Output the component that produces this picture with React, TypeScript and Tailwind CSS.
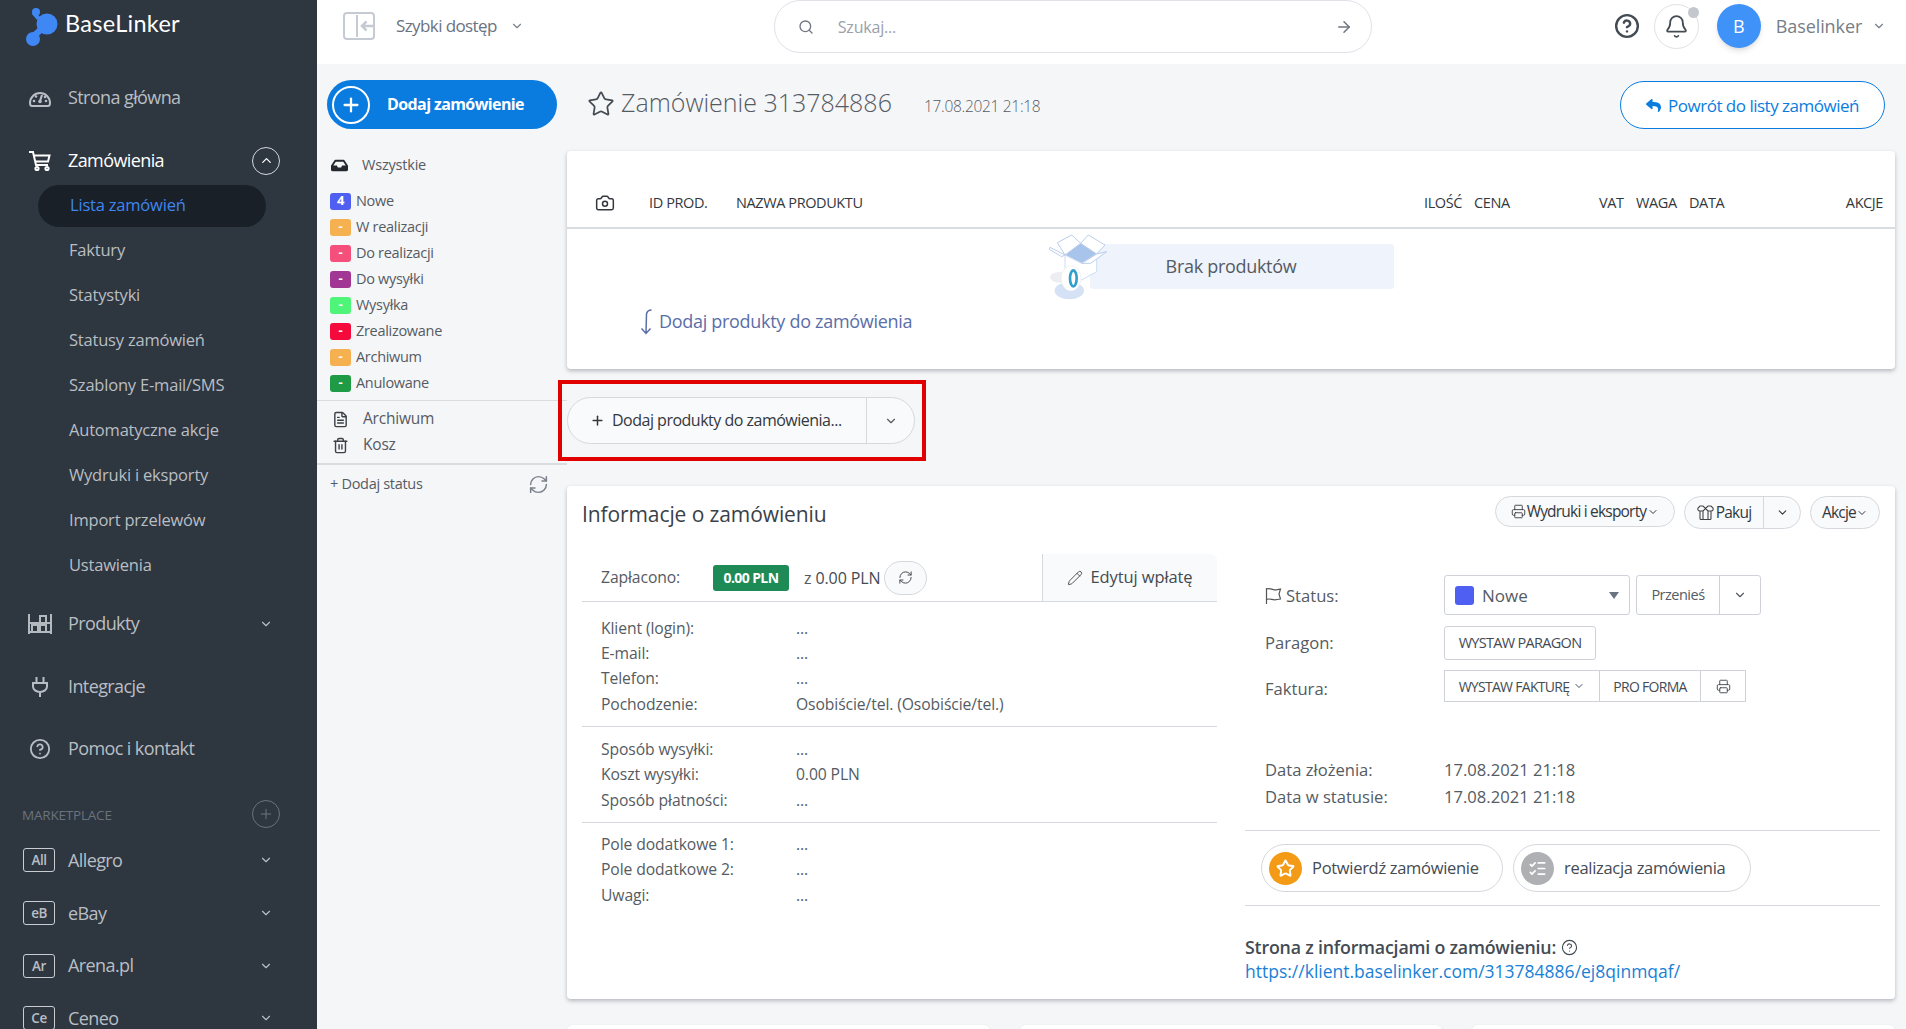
import React from 'react';
import {
  ArrowRight,
  Bell,
  Camera,
  ChevronDown,
  ChevronUp,
  CircleHelp,
  FileText,
  ListChecks,
  Pencil,
  Plus,
  Printer,
  RefreshCw,
  Search,
  Star,
  Trash2,
} from 'lucide-react';
import { FaInbox, FaReply } from 'react-icons/fa';

const subMenu = [
  'Faktury',
  'Statystyki',
  'Statusy zamówień',
  'Szablony E-mail/SMS',
  'Automatyczne akcje',
  'Wydruki i eksporty',
  'Import przelewów',
  'Ustawienia',
];

const marketplaces = [
  { short: 'All', name: 'Allegro' },
  { short: 'eB', name: 'eBay' },
  { short: 'Ar', name: 'Arena.pl' },
  { short: 'Ce', name: 'Ceneo' },
];

const statuses = [
  { label: 'Nowe', count: '4', color: 'bg-[#4f5ff2]' },
  { label: 'W realizacji', count: '-', color: 'bg-[#f5b04f]' },
  { label: 'Do realizacji', count: '-', color: 'bg-[#f54f7b]' },
  { label: 'Do wysyłki', count: '-', color: 'bg-[#a23694]' },
  { label: 'Wysyłka', count: '-', color: 'bg-[#4ff578]' },
  { label: 'Zrealizowane', count: '-', color: 'bg-[#f50a3c]' },
  { label: 'Archiwum', count: '-', color: 'bg-[#f5b04f]' },
  { label: 'Anulowane', count: '-', color: 'bg-[#1f9a45]' },
];

function Logo() {
  return (
    <svg width="34" height="40" viewBox="0 0 34 40" className="shrink-0">
      <g fill="#3f87f5">
        <circle cx="11" cy="5" r="4" />
        <circle cx="22" cy="17" r="10.5" />
        <circle cx="8" cy="32" r="7" />
        <path d="M10 4l5 6-3 3-5-6zM5 28l9-8 4 5-9 8z" />
      </g>
    </svg>
  );
}

function GaugeIcon() {
  return (
    <svg width="22" height="18" viewBox="0 0 22 18" fill="none" stroke="#b9bec4" strokeWidth="2" className="shrink-0">
      <path d="M3 17h16c1 0 2-1 2-3a10 10 0 0 0-20 0c0 2 1 3 2 3z" />
      <path d="M11 12l2-6" strokeWidth="2.200" />
      <circle cx="11" cy="12.500" r="1.800" fill="#b9bec4" stroke="none" />
      <g fill="#b9bec4" stroke="none">
        <circle cx="5" cy="12" r="1.300" />
        <circle cx="7" cy="7.500" r="1.300" />
        <circle cx="16" cy="8" r="1.300" />
        <circle cx="17" cy="12" r="1.300" />
      </g>
    </svg>
  );
}

function CartIcon() {
  return (
    <svg width="22" height="22" viewBox="0 0 22 22" fill="none" stroke="#fff" strokeWidth="2" className="shrink-0">
      <path d="M0 2h4l3 13h12M5 5.500h15.500l-1.500 6H6.500" />
      <circle cx="8" cy="18.500" r="1.600" />
      <circle cx="18" cy="18.500" r="1.600" />
    </svg>
  );
}

function ShelfIcon() {
  return (
    <svg width="24" height="20" viewBox="0 0 24 20" fill="none" stroke="#b4b9bf" strokeWidth="2" className="shrink-0">
      <path d="M1 0v20M23 0v20M1 18h22M1 9h22" />
      <rect x="4" y="11" width="6" height="7" />
      <rect x="12" y="11" width="6" height="7" />
      <rect x="12" y="2" width="6" height="7" />
    </svg>
  );
}

function PlugIcon() {
  return (
    <svg width="16" height="20" viewBox="0 0 16 20" fill="none" stroke="#b9bec4" strokeWidth="2" className="shrink-0 mx-[3px]">
      <path d="M4.500 0v6M11.500 0v6M1 6h14v3.500a7 5.500 0 0 1-14 0zM8 15v5" />
    </svg>
  );
}

function CollapseIcon() {
  return (
    <svg width="32" height="28" viewBox="0 0 32 28" fill="none" stroke="#c6cbd3" strokeWidth="2" className="ml-[26px] shrink-0">
      <rect x="1" y="1" width="30" height="26" rx="3" />
      <path d="M14 3v22" />
      <path d="M31 14H19M23.500 9.500L19 14l4.500 4.500" strokeWidth="2.500" />
    </svg>
  );
}

function FlagIcon() {
  return (
    <svg width="18" height="18" viewBox="0 0 18 18" fill="none" stroke="#555" strokeWidth="1.2" className="shrink-0">
      <path d="M1.500 1v16M1.500 2c4-1.500 5 .8 8 .8 2 0 4-.5 6-.8l-1.500 5 1.500 5c-3 .8-4.500 .8-6 .8-3 0-4-1.600-8-.4" />
    </svg>
  );
}

function BoxIcon() {
  return (
    <svg width="17" height="15" viewBox="0 0 17 15" fill="none" stroke="#444" strokeWidth="1.100" className="shrink-0">
      <path d="M3 6v7.500a1 1 0 0 0 1 1h9a1 1 0 0 0 1-1V6M6 6v8.500M11 6v8.500M3 6C1 6 .5 4.500 1 3l2-2h3l2.500 2.500L11 1h3l2 2c.5 1.500 0 3-2 3h-3L8.500 3.500 6 6z" />
    </svg>
  );
}

function HookArrow() {
  return (
    <svg width="14" height="26" viewBox="0 0 14 26" fill="none" stroke="#5a6ea8" strokeWidth="1.500" className="shrink-0">
      <path d="M12.500 1C9 1 8 2.500 7.500 5L7 24M2.500 19.500L7 24.500l4.500-5" />
    </svg>
  );
}

function EmptyBox() {
  return (
    <svg width="80" height="72" viewBox="0 0 240 216" fill="none" className="absolute left-[-50px] top-[-14px]">
      <ellipse cx="88" cy="182" rx="44" ry="26" fill="#d5e2f5" />
      <ellipse cx="58" cy="142" rx="28" ry="16" fill="#eceef1" />
      <path d="M75 75l47-35 48 32-45 28z" fill="#a9c4ea" />
      <path d="M75 75l50 25 45-28v53l-45 25-50-25z" fill="#fff" stroke="#cddcf3" strokeWidth="3" />
      <path d="M122 40L95 15 52 38l23 37zM122 40l23-25 50 30-25 27z" fill="#fff" stroke="#b9cdec" strokeWidth="3" />
      <path d="M75 75L30 52l-2 6 37 22zM125 100l45-28 30-7-48 35z" fill="#fff" stroke="#b9cdec" strokeWidth="3" />
      <ellipse cx="93" cy="145" rx="30" ry="38" fill="#fff" stroke="#e8ebf0" strokeWidth="2" />
      <ellipse cx="100" cy="145" rx="10" ry="24" fill="#fff" stroke="#2f9fcf" strokeWidth="8" />
    </svg>
  );
}

function Sidebar() {
  return (
    <aside className="w-[317px] shrink-0 bg-[#2e363f] overflow-hidden text-[#b9bec4]">
      <div className="h-[75px] pl-[25px] pt-[7px] flex gap-[6px]">
        <Logo />
        <span className="font-['Lato',sans-serif] text-[23.500px] leading-[32px] tracking-[0.3px] text-white">BaseLinker</span>
      </div>
      <div className="h-[45px] flex items-center pl-[29px]">
        <GaugeIcon />
        <span className="ml-[17px] text-[18px] tracking-[-0.6px]">Strona główna</span>
      </div>
      <div className="mt-[18px] h-[45px] flex items-center pl-[29px] pr-[37px] text-white">
        <CartIcon />
        <span className="ml-[17px] text-[18px] tracking-[-0.6px] flex-1">Zamówienia</span>
        <span className="w-[28px] h-[28px] rounded-full border border-[#d4d7da] flex items-center justify-center">
          <ChevronUp size={15} />
        </span>
      </div>
      <div className="h-[45px] flex items-center">
        <div className="ml-[38px] w-[228px] h-[42px] rounded-[21px] bg-[#1a2027] pl-[32px] flex items-center text-[16.500px] tracking-[-0.2px] text-[#3f87f0]">
          Lista zamówień
        </div>
      </div>
      {subMenu.map((item) => (
        <div key={item} className="h-[45px] pl-[69px] flex items-center text-[16.500px] tracking-[-0.2px]">
          {item}
        </div>
      ))}
      <div className="mt-[13px] h-[45px] flex items-center pl-[28px] pr-[44px]">
        <ShelfIcon />
        <span className="ml-[16px] text-[18px] tracking-[-0.6px] flex-1">Produkty</span>
        <ChevronDown size={14} />
      </div>
      <div className="mt-[18px] h-[45px] flex items-center pl-[29px]">
        <PlugIcon />
        <span className="ml-[17px] text-[18px] tracking-[-0.6px]">Integracje</span>
      </div>
      <div className="mt-[17px] h-[45px] flex items-center pl-[29px]">
        <CircleHelp size={22} className="shrink-0" />
        <span className="ml-[17px] text-[18px] tracking-[-0.6px]">Pomoc i kontakt</span>
      </div>
      <div className="mt-[26px] h-[34px] flex items-center pl-[22px] pr-[37px] text-[#6a737d]">
        <span className="flex-1 text-[13.500px] tracking-[-0.2px] mt-[2px]">MARKETPLACE</span>
        <span className="w-[28px] h-[28px] rounded-full border-[1.500px] border-[#6a737d] flex items-center justify-center">
          <Plus size={16} strokeWidth={1.500} />
        </span>
      </div>
      <div className="mt-[3px]">
        {marketplaces.map((m) => (
          <div key={m.name} className="h-[52.700px] flex items-center pl-[23px] pr-[44px]">
            <span className="w-[32px] h-[24px] rounded-[3px] border border-[#c9cdd1] flex items-center justify-center text-[13.500px] font-semibold tracking-[-0.5px]">
              {m.short}
            </span>
            <span className="ml-[13px] text-[18px] tracking-[-0.6px] flex-1">{m.name}</span>
            <ChevronDown size={14} />
          </div>
        ))}
      </div>
    </aside>
  );
}

function TopBar() {
  return (
    <header className="h-16 shrink-0 bg-white flex items-center pb-[12px]">
      <CollapseIcon />
      <span className="ml-[21px] text-[17px] tracking-[-0.6px] text-[#6b7280]">Szybki dostęp</span>
      <ChevronDown size={14} className="ml-[13px] text-[#7a818a]" />
      <div className="ml-[250px] w-[598px] h-[53px] self-start rounded-[26px] border border-[#dfe2e7] flex items-center pl-[23px] pr-[18px] text-[#6f7680]">
        <Search size={16} />
        <span className="ml-[24px] text-[16px] tracking-[-0.2px] text-[#9aa1ab] flex-1">Szukaj...</span>
        <ArrowRight size={18} />
      </div>
      <CircleHelp size={26} strokeWidth={2.200} className="ml-[242px] text-[#444b53]" />
      <div className="ml-[14px] relative w-[45px] h-[45px] rounded-full border border-[#dfe2e7] flex items-center justify-center text-[#444b53]">
        <Bell size={25} strokeWidth={1.700} />
        <span className="absolute -right-[1px] top-[2px] w-[11px] h-[11px] rounded-full bg-[#c4c8ce]" />
      </div>
      <div className="ml-[18px] w-[44px] h-[44px] rounded-full bg-[#3f92f7] shadow-md text-white flex items-center justify-center text-[18px]">
        B
      </div>
      <span className="ml-[15px] text-[18px] tracking-[-0.1px] text-[#777e87]">Baselinker</span>
      <ChevronDown size={14} className="ml-[10px] text-[#777e87]" />
    </header>
  );
}

function StatusColumn() {
  return (
    <div className="w-[250px] shrink-0 text-[#555b63]">
      <div className="ml-[10px] mt-[16px] w-[230px] h-[49px] rounded-full bg-[#0a7ce0] flex items-center pl-[5px] text-white">
        <span className="w-[38px] h-[38px] rounded-full border-2 border-white flex items-center justify-center">
          <Plus size={22} strokeWidth={2.500} />
        </span>
        <span className="ml-[17px] mb-[2px] text-[16px] font-bold tracking-[-0.6px]">Dodaj zamówienie</span>
      </div>
      <div className="mt-[23px] h-[26px] flex items-center pl-[14px] text-[14.500px] tracking-[-0.2px]">
        <FaInbox size={17} className="text-[#23282e]" />
        <span className="ml-[14px]">Wszystkie</span>
      </div>
      <div className="mt-[10px] pl-[13px]">
        {statuses.map((s) => (
          <div key={s.label} className="h-[26px] flex items-center text-[14.500px] tracking-[-0.3px]">
            <span className={`w-[21px] h-[17px] rounded-[3px] ${s.color} text-white text-[13px] font-bold flex items-center justify-center`}>
              {s.count}
            </span>
            <span className="ml-[5px]">{s.label}</span>
          </div>
        ))}
      </div>
      <div className="mt-[4px] border-t border-[#d9dce1] pt-[5px] pb-[5px] pl-[15px] text-[15.500px] tracking-[-0.2px]">
        <div className="h-[26px] flex items-center">
          <FileText size={17} className="text-[#3c4148]" />
          <span className="ml-[14px]">Archiwum</span>
        </div>
        <div className="h-[26px] flex items-center">
          <Trash2 size={17} className="text-[#3c4148]" />
          <span className="ml-[14px]">Kosz</span>
        </div>
      </div>
      <div className="border-t-2 border-[#d9dce1] pt-[6px] pl-[13px] pr-[18px] h-[34px] flex items-center justify-between text-[14.500px] tracking-[-0.3px]">
        <span>+ Dodaj status</span>
        <RefreshCw size={21} strokeWidth={1.700} className="text-[#7a818a]" />
      </div>
    </div>
  );
}

function ProductsCard() {
  return (
    <section className="mt-[22px] h-[218px] rounded-[4px] bg-white shadow-[0_2px_4px_rgba(60,70,85,0.35)]">
      <div className="h-[78px] pt-[28px] border-b-2 border-[#d9dce1] flex items-center text-[14.500px] tracking-[-0.4px] text-[#33383e]">
        <span className="w-[82px] pl-[28px]">
          <Camera size={20} strokeWidth={1.800} />
        </span>
        <span className="w-[87px]">ID PROD.</span>
        <span className="w-[688px]">NAZWA PRODUKTU</span>
        <span className="w-[50px]">ILOŚĆ</span>
        <span className="w-[125px]">CENA</span>
        <span className="w-[37px]">VAT</span>
        <span className="w-[53px]">WAGA</span>
        <span className="flex-1">DATA</span>
        <span className="pr-[12px]">AKCJE</span>
      </div>
      <div className="relative ml-[523px] mt-[15px] w-[304px] h-[45px] rounded-[3px] bg-[#eef3fc] flex items-center justify-center pr-[22px] text-[18px] tracking-[-0.3px] text-[#555b63]">
        <EmptyBox />
        Brak produktów
      </div>
      <div className="mt-[19px] pl-[72px] flex items-center gap-[6px] text-[18px] tracking-[-0.3px] text-[#5a6ea8]">
        <HookArrow />
        Dodaj produkty do zamówienia
      </div>
    </section>
  );
}

function AddProductsButton() {
  return (
    <div className="relative mt-[28px] w-[348px] h-[47px]">
      <div className="h-full rounded-full border border-[#d5d8dd] bg-[#f9fafb] flex items-center text-[#33383e]">
        <div className="flex-1 h-full flex items-center pl-[22px] pb-[1px] border-r border-[#d5d8dd] font-medium text-[16px] tracking-[-0.5px]">
          <Plus size={15} strokeWidth={2.400} />
          <span className="ml-[7px]">Dodaj produkty do zamówienia...</span>
        </div>
        <div className="w-[47px] flex justify-center text-[#555b63]">
          <ChevronDown size={14} />
        </div>
      </div>
      <div className="absolute -left-[9px] -right-[11px] -top-[17px] -bottom-[17px] border-[4px] border-[#e00000]" />
    </div>
  );
}

function InfoRow({ label, value }: { label: string; value: string }) {
  return (
    <div className="h-[25.300px] flex items-center">
      <span className="w-[195px] shrink-0">{label}</span>
      <span>{value}</span>
    </div>
  );
}

function PillButton({ children, className }: { children: React.ReactNode; className: string }) {
  return (
    <div className={`rounded-full border border-[#d5d8dd] bg-[#f9fafb] flex items-center text-[15.500px] tracking-[-0.8px] text-[#33383e] ${className}`}>
      {children}
    </div>
  );
}

function OrderInfo() {
  return (
    <section className="mt-[42px] h-[513px] rounded-[4px] bg-white shadow-[0_2px_4px_rgba(60,70,85,0.35)]">
      <div className="h-[67px] pl-[15px] pr-[15px] flex justify-between text-[#3a4149]">
        <h2 className="text-[21px] font-medium tracking-[-0.1px] mt-[13px] leading-[30px]">Informacje o zamówieniu</h2>
        <div className="flex gap-[9px] pt-[10px]">
          <PillButton className="w-[180px] h-[31px] justify-center gap-[1px]">
            <Printer size={15} strokeWidth={1.400} />
            Wydruki i eksporty
            <ChevronDown size={12} />
          </PillButton>
          <PillButton className="w-[117px] h-[33px]">
            <span className="w-[79px] h-full flex items-center justify-center gap-[2px] border-r border-[#d5d8dd]">
              <BoxIcon />
              Pakuj
            </span>
            <span className="flex-1 flex justify-center">
              <ChevronDown size={13} />
            </span>
          </PillButton>
          <PillButton className="w-[70px] h-[33px] justify-center">
            Akcje
            <ChevronDown size={12} />
          </PillButton>
        </div>
      </div>
      <div className="flex text-[15.700px] tracking-[-0.1px] text-[#555b63]">
        <div className="ml-[15px] w-[635px] shrink-0">
          <div className="h-[49px] border-b border-[#d5d8dd] flex items-center pl-[19px] pt-[1px] relative">
            <span className="w-[112px]">Zapłacono:</span>
            <span className="w-[76px] h-[26px] rounded-[3px] bg-[#1e8a55] text-white font-bold text-[14px] tracking-[-0.6px] flex items-center justify-center">
              0.00 PLN
            </span>
            <span className="ml-[15px] text-[16px]">z <span className="text-[#444b53] font-medium">0.00 PLN</span></span>
            <span className="ml-[3px] w-[43px] h-[34px] rounded-full border border-[#d5d8dd] bg-[#f9fafb] flex items-center justify-center text-[#444b53]">
              <RefreshCw size={15} strokeWidth={1.600} />
            </span>
            <div className="ml-auto w-[175px] h-full rounded-tr-[6px] bg-[#f9fafb] border-l border-[#d5d8dd] flex items-center justify-center gap-[7px] text-[16.500px] text-[#444b53] font-medium">
              <Pencil size={16} strokeWidth={1.400} />
              Edytuj wpłatę
            </div>
          </div>
          <div className="pl-[19px] pt-[14px] pb-[9px] border-b border-[#d5d8dd]">
            <InfoRow label="Klient (login):" value="..." />
            <InfoRow label="E-mail:" value="..." />
            <InfoRow label="Telefon:" value="..." />
            <InfoRow label="Pochodzenie:" value="Osobiście/tel. (Osobiście/tel.)" />
          </div>
          <div className="pl-[19px] pt-[10px] pb-[9px] border-b border-[#d5d8dd]">
            <InfoRow label="Sposób wysyłki:" value="..." />
            <InfoRow label="Koszt wysyłki:" value="0.00 PLN" />
            <InfoRow label="Sposób płatności:" value="..." />
          </div>
          <div className="pl-[19px] pt-[9px]">
            <InfoRow label="Pole dodatkowe 1:" value="..." />
            <InfoRow label="Pole dodatkowe 2:" value="..." />
            <InfoRow label="Uwagi:" value="..." />
          </div>
        </div>
        <div className="ml-[28px] w-[635px] shrink-0 text-[16.600px] tracking-[0px]">
          <div className="pl-[20px] pt-[22px]">
            <div className="h-[40px] flex items-center">
              <span className="w-[179px] flex items-center gap-[3px] pt-[2px]">
                <FlagIcon />
                Status:
              </span>
              <div className="w-[186px] h-full rounded-[3px] border border-[#cfd3d9] flex items-center pl-[10px] pr-[10px] text-[17px]">
                <span className="w-[19px] h-[19px] rounded-[3px] bg-[#4f5ff2]" />
                <span className="ml-[8px] flex-1 mt-[1px]">Nowe</span>
                <span className="w-0 h-0 border-x-[5px] border-x-transparent border-t-[7px] border-t-[#6b7280]" />
              </div>
              <div className="ml-[6px] w-[125px] h-full rounded-[3px] border border-[#cfd3d9] flex items-center text-[14.500px] tracking-[-0.5px]">
                <span className="w-[83px] h-full flex items-center justify-center border-r border-[#cfd3d9]">Przenieś</span>
                <span className="flex-1 flex justify-center">
                  <ChevronDown size={14} />
                </span>
              </div>
            </div>
            <div className="mt-[11px] h-[34px] flex items-center">
              <span className="w-[179px]">Paragon:</span>
              <div className="w-[152px] h-full rounded-[3px] border border-[#cfd3d9] flex items-center justify-center text-[14.500px] tracking-[-0.7px] text-[#444b53]">
                WYSTAW PARAGON
              </div>
            </div>
            <div className="mt-[10px] h-[32px] flex items-center">
              <span className="w-[179px] mt-[7px]">Faktura:</span>
              <div className="h-full flex border border-[#cfd3d9] text-[14px] tracking-[-0.7px] text-[#444b53]">
                <span className="w-[155px] flex items-center justify-center gap-[4px] border-r border-[#cfd3d9]">
                  WYSTAW FAKTURĘ
                  <ChevronDown size={12} />
                </span>
                <span className="w-[101px] flex items-center justify-center border-r border-[#cfd3d9]">PRO FORMA</span>
                <span className="w-[44px] flex items-center justify-center">
                  <Printer size={15} strokeWidth={1.500} />
                </span>
              </div>
            </div>
            <div className="mt-[55px] h-[27px] flex items-center">
              <span className="w-[179px]">Data złożenia:</span>
              <span>17.08.2021 21:18</span>
            </div>
            <div className="h-[27px] flex items-center">
              <span className="w-[179px]">Data w statusie:</span>
              <span>17.08.2021 21:18</span>
            </div>
          </div>
          <div className="mt-[19px] border-y border-[#d5d8dd] pt-[13px] pb-[13px] pl-[16px] flex gap-[10px] text-[#444b53]">
            <div className="w-[242px] h-[48px] rounded-full border border-[#d5d8dd] flex items-center pl-[7px]">
              <span className="w-[33px] h-[33px] rounded-full bg-[#f39a16] flex items-center justify-center text-white">
                <Star size={19} strokeWidth={2.500} />
              </span>
              <span className="ml-[10px] text-[16.500px] font-medium tracking-[-0.3px]">Potwierdź zamówienie</span>
            </div>
            <div className="w-[238px] h-[48px] rounded-full border border-[#d5d8dd] flex items-center pl-[7px]">
              <span className="w-[33px] h-[33px] rounded-full bg-[#aeb0b3] flex items-center justify-center text-white">
                <ListChecks size={19} strokeWidth={2.200} />
              </span>
              <span className="ml-[10px] text-[16.500px] font-medium tracking-[-0.3px]">realizacja zamówienia</span>
            </div>
          </div>
          <div className="mt-[29px] h-[24px] flex items-center gap-[5px] text-[17.800px] font-semibold tracking-[-0.2px] text-[#444b53]">
            Strona z informacjami o zamówieniu:
            <CircleHelp size={17} strokeWidth={1.600} />
          </div>
          <div className="h-[24px] flex items-center text-[17.500px] tracking-[0px] text-[#1a7fd6]">
            https://klient.baselinker.com/313784886/ej8qinmqaf/
          </div>
        </div>
      </div>
    </section>
  );
}

export default function App() {
  return (
    <div className="h-screen flex overflow-hidden font-['Open_Sans',sans-serif] bg-[#f5f6f8]">
      <Sidebar />
      <div className="flex-1 min-w-0 flex flex-col">
        <TopBar />
        <div className="flex flex-1 min-h-0">
          <StatusColumn />
          <main className="flex-1 min-w-0 pr-[11px]">
            <div className="mt-[17px] h-[48px] flex items-center">
              <Star size={28} strokeWidth={1.500} className="ml-[20px] mb-[3px] text-[#444b53]" />
              <h1 className="ml-[6px] mb-[4px] text-[25px] font-light text-[#555b63]">Zamówienie 313784886</h1>
              <span className="ml-[32px] mt-[3px] text-[15.500px] font-light tracking-[-0.3px] text-[#555b63]">17.08.2021 21:18</span>
              <div className="ml-auto mr-[10px] w-[265px] h-full rounded-full border-[1.500px] border-[#0a7ce0] bg-white flex items-center justify-center gap-[7px] pt-[1px] text-[17px] font-medium tracking-[-0.5px] text-[#0a7ce0]">
                <FaReply size={15} />
                Powrót do listy zamówień
              </div>
            </div>
            <ProductsCard />
            <AddProductsButton />
            <OrderInfo />
            <div className="mt-[26px] flex gap-[30px]">
              <div className="flex-1 h-[40px] rounded-t-[6px] bg-white shadow-sm" />
              <div className="flex-1 h-[40px] rounded-t-[6px] bg-white shadow-sm" />
              <div className="flex-1 h-[40px] rounded-t-[6px] bg-white shadow-sm" />
            </div>
          </main>
        </div>
      </div>
    </div>
  );
}
